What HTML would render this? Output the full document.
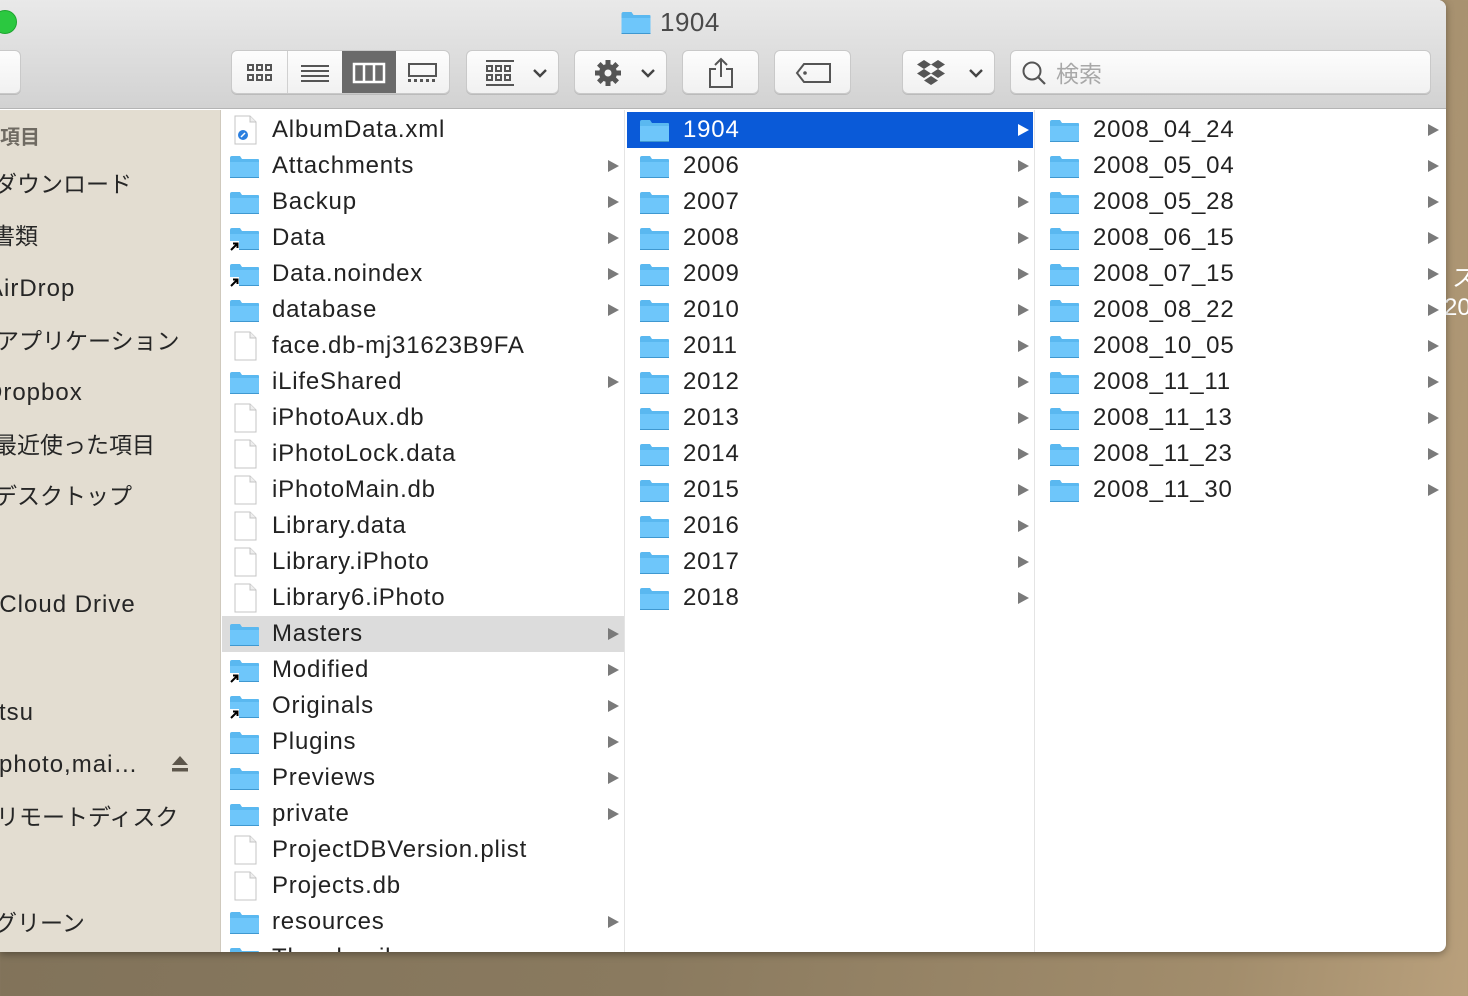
<!DOCTYPE html>
<html><head><meta charset="utf-8"><style>
*{margin:0;padding:0;box-sizing:border-box}
body{width:1468px;height:996px;overflow:hidden;position:relative;font-family:"Liberation Sans","Noto Sans CJK JP",sans-serif;background:linear-gradient(100deg,#7f7159 0%,#8a7a5f 50%,#a28d6c 85%,#b9a07c 100%);}
.win{position:absolute;left:0;top:0;width:1446px;height:952px;border-radius:0 8px 8px 0;overflow:hidden;background:#fff;box-shadow:0 2px 8px rgba(0,0,0,.35)}
.tb{position:absolute;left:0;top:0;width:1446px;height:109px;background:linear-gradient(#e9e9e9,#d2d2d2);border-bottom:1px solid #b4b4b4}
.btn{position:absolute;top:50px;height:44px;background:linear-gradient(#fdfdfd,#f1f1f1);border:1px solid #c9c9c9;border-radius:6px;box-shadow:0 1px 0 #bbb}
.side{position:absolute;left:0;top:110px;width:221px;height:842px;background:#e3ddd1;border-right:1px solid #cfc9bd;overflow:hidden}
.si{position:absolute;font-size:23px;color:#262626;white-space:nowrap;line-height:28px}
.si.l{font-size:24px;letter-spacing:1px}
.col{position:absolute;top:110px;height:842px;overflow:hidden}
.row{position:relative;height:36px;font-size:24px;color:#222;line-height:36px;white-space:nowrap;letter-spacing:0.8px}
.row .ic{position:absolute;top:7px}
.row .t{position:absolute;top:0}
.row .ar{position:absolute;top:12px;width:0;height:0;border-left:11px solid #7a7a7a;border-top:6px solid transparent;border-bottom:6px solid transparent}
.sel{background:#0a5ad8;color:#fff}
.sel .ar{border-left-color:#fff}
.gr{background:#dcdcdc}
.fd{width:31px;height:24px}
</style></head><body>
<svg width="0" height="0" style="position:absolute">
<defs>
<symbol id="f" viewBox="0 0 31 24"><path d="M1 3 Q1 1 3 1 L11 1 L13 4 L29 4 Q30 4 30 5 L30 22 Q30 23 29 23 L2 23 Q1 23 1 22 Z" fill="#5ab8f0"/><path d="M1 7 L30 7 L30 22 Q30 23 29 23 L2 23 Q1 23 1 22 Z" fill="#6ec6fa"/><path d="M1 22.5 L30 22.5" stroke="#3f98d0" stroke-width="1"/></symbol>
<symbol id="d" viewBox="0 0 31 30"><path d="M5 1 L20 1 L26 7 L26 29 L5 29 Z" fill="#fff" stroke="#c4c4c4"/><path d="M20 1 L20 7 L26 7" fill="#eee" stroke="#c4c4c4"/></symbol>
<symbol id="a" viewBox="0 0 10 10"><rect x="0" y="0" width="10" height="10" fill="#fff"/><path d="M2 9 L8 3 M4 2.5 L8.5 2.5 L8.5 7" stroke="#000" stroke-width="2" fill="none"/></symbol>
</defs></svg>
<div style="position:absolute;left:1452px;top:258px;color:#fff;font-size:24px">ス</div>
<div style="position:absolute;left:1444px;top:294px;color:#fff;font-size:24px">20</div>
<div class="win">
<div class="tb">
<div style="position:absolute;left:-7px;top:10px;width:24px;height:24px;border-radius:50%;background:#2bc840;border:1px solid #1ea530"></div>
<svg style="position:absolute;left:620px;top:11px" width="32" height="24"><use href="#f"/></svg>
<div style="position:absolute;left:660px;top:7px;font-size:26px;color:#4a4a4a;letter-spacing:0.5px">1904</div>
<div class="btn" style="left:-10px;width:31px"></div>
<div class="btn" style="left:231px;width:219px;overflow:hidden">
<div style="position:absolute;left:55px;top:0;width:1px;height:44px;background:#d0d0d0"></div>
<div style="position:absolute;left:110px;top:0;width:54px;height:44px;background:#6a6a6a"></div>
<svg style="position:absolute;left:14px;top:11px" width="30" height="22"><g fill="none" stroke="#555" stroke-width="2"><rect x="2" y="3" width="5" height="5"/><rect x="11" y="3" width="5" height="5"/><rect x="20" y="3" width="5" height="5"/><rect x="2" y="13" width="5" height="5"/><rect x="11" y="13" width="5" height="5"/><rect x="20" y="13" width="5" height="5"/></g></svg>
<svg style="position:absolute;left:68px;top:11px" width="30" height="22"><g stroke="#555" stroke-width="2"><path d="M1 4H29M1 9H29M1 14H29M1 19H29"/></g></svg>
<svg style="position:absolute;left:120px;top:11px" width="34" height="22"><g fill="none" stroke="#fff" stroke-width="2.5"><rect x="2" y="2" width="30" height="18"/><path d="M12 2V20M22 2V20"/></g></svg>
<svg style="position:absolute;left:175px;top:11px" width="32" height="22"><g fill="none" stroke="#555" stroke-width="2"><rect x="2" y="2" width="27" height="12"/></g><g fill="#555"><rect x="1" y="17" width="3" height="3"/><rect x="7" y="17" width="3" height="3"/><rect x="13" y="17" width="3" height="3"/><rect x="19" y="17" width="3" height="3"/><rect x="25" y="17" width="3" height="3"/></g></svg>
</div>
<div class="btn" style="left:466px;width:93px">
<svg style="position:absolute;left:18px;top:8px" width="30" height="28"><g fill="none" stroke="#555" stroke-width="2"><path d="M1 2H29M1 26H29"/><rect x="2" y="7" width="5" height="5"/><rect x="11" y="7" width="5" height="5"/><rect x="20" y="7" width="5" height="5"/><rect x="2" y="16" width="5" height="5"/><rect x="11" y="16" width="5" height="5"/><rect x="20" y="16" width="5" height="5"/></g></svg>
<svg style="position:absolute;left:65px;top:16px" width="16" height="12"><path d="M2 3L8 9L14 3" fill="none" stroke="#444" stroke-width="2.4"/></svg>
</div>
<div class="btn" style="left:574px;width:93px">
<svg style="position:absolute;left:18px;top:7px" width="30" height="30" viewBox="0 0 30 30"><g fill="#555"><circle cx="15" cy="15" r="9"/><g stroke="#555" stroke-width="5"><path d="M15 2V28M2 15H28M5.8 5.8L24.2 24.2M24.2 5.8L5.8 24.2"/></g></g><circle cx="15" cy="15" r="3.5" fill="#f5f5f5"/></svg>
<svg style="position:absolute;left:65px;top:16px" width="16" height="12"><path d="M2 3L8 9L14 3" fill="none" stroke="#444" stroke-width="2.4"/></svg>
</div>
<div class="btn" style="left:682px;width:77px">
<svg style="position:absolute;left:24px;top:6px" width="28" height="32"><g fill="none" stroke="#555" stroke-width="2"><path d="M9 12H3V30H25V12H19"/><path d="M14 2V20M8 8L14 2L20 8"/></g></svg>
</div>
<div class="btn" style="left:774px;width:77px">
<svg style="position:absolute;left:20px;top:11px" width="38" height="22"><path d="M9 2H35V20H9L2 11Z" fill="none" stroke="#555" stroke-width="2"/><circle cx="10" cy="11" r="1.8" fill="#555"/></svg>
</div>
<div class="btn" style="left:902px;width:93px">
<svg style="position:absolute;left:12px;top:8px" width="32" height="28" viewBox="0 0 32 28"><g fill="#555"><path d="M9 1L16 5.5L9 10L2 5.5Z"/><path d="M23 1L30 5.5L23 10L16 5.5Z"/><path d="M9 10L16 14.5L9 19L2 14.5Z"/><path d="M23 10L30 14.5L23 19L16 14.5Z"/><path d="M16 17L23 21.5L16 26L9 21.5Z"/></g></svg>
<svg style="position:absolute;left:65px;top:16px" width="16" height="12"><path d="M2 3L8 9L14 3" fill="none" stroke="#444" stroke-width="2.4"/></svg>
</div>
<div class="btn" style="left:1010px;width:421px">
<svg style="position:absolute;left:10px;top:9px" width="28" height="28"><circle cx="11" cy="11" r="8.5" fill="none" stroke="#555" stroke-width="2"/><path d="M17 17L24 24" stroke="#555" stroke-width="2.2"/></svg>
<div style="position:absolute;left:45px;top:4px;font-size:23px;color:#a8a8a8">検索</div>
</div>
</div>

<div class="side">
<div class="si" style="left:0;top:14px;font-size:20px;color:#6f6a62;font-weight:bold">項目</div>
<div class="si" style="left:-6px;top:60px">ダウンロード</div>
<div class="si" style="left:-8px;top:112px">書類</div>
<div class="si l" style="left:-13px;top:165px">AirDrop</div>
<div class="si" style="left:-4px;top:217px">アプリケーション</div>
<div class="si l" style="left:-15px;top:269px">Dropbox</div>
<div class="si" style="left:-6px;top:321px">最近使った項目</div>
<div class="si" style="left:-6px;top:372px">デスクトップ</div>
<div class="si l" style="left:-7px;top:481px">iCloud Drive</div>
<div class="si l" style="left:-1px;top:589px">tsu</div>
<div class="si l" style="left:-1px;top:641px">photo,mai…</div>
<svg style="position:absolute;left:171px;top:645px" width="18" height="20"><path d="M9 1L17 10H1Z" fill="#5d564b"/><rect x="1" y="13" width="16" height="3.5" fill="#5d564b"/></svg>
<div class="si" style="left:-4px;top:693px">リモートディスク</div>
<div class="si" style="left:-6px;top:799px">グリーン</div>
</div>

<div class="col" style="left:222px;width:403px;border-right:1px solid #e4e4e4;padding-top:2px">
<div class="row"><svg class="ic" style="left:8px;top:3px" width="31" height="30"><use href="#d"/><circle cx="13" cy="20" r="5" fill="#2a7fe0"/><path d="M11 22L15 18" stroke="#fff" stroke-width="1.5"/></svg><span class="t" style="left:50px">AlbumData.xml</span></div>
<div class="row"><svg class="ic fd" style="left:7px"><use href="#f"/></svg><span class="t" style="left:50px">Attachments</span><span class="ar" style="left:386px"></span></div>
<div class="row"><svg class="ic fd" style="left:7px"><use href="#f"/></svg><span class="t" style="left:50px">Backup</span><span class="ar" style="left:386px"></span></div>
<div class="row"><svg class="ic fd" style="left:7px"><use href="#f"/><use href="#a" x="0" y="14" width="10" height="10"/></svg><span class="t" style="left:50px">Data</span><span class="ar" style="left:386px"></span></div>
<div class="row"><svg class="ic fd" style="left:7px"><use href="#f"/><use href="#a" x="0" y="14" width="10" height="10"/></svg><span class="t" style="left:50px">Data.noindex</span><span class="ar" style="left:386px"></span></div>
<div class="row"><svg class="ic fd" style="left:7px"><use href="#f"/></svg><span class="t" style="left:50px">database</span><span class="ar" style="left:386px"></span></div>
<div class="row"><svg class="ic" style="left:8px;top:3px" width="31" height="30"><use href="#d"/></svg><span class="t" style="left:50px">face.db-mj31623B9FA</span></div>
<div class="row"><svg class="ic fd" style="left:7px"><use href="#f"/></svg><span class="t" style="left:50px">iLifeShared</span><span class="ar" style="left:386px"></span></div>
<div class="row"><svg class="ic" style="left:8px;top:3px" width="31" height="30"><use href="#d"/></svg><span class="t" style="left:50px">iPhotoAux.db</span></div>
<div class="row"><svg class="ic" style="left:8px;top:3px" width="31" height="30"><use href="#d"/></svg><span class="t" style="left:50px">iPhotoLock.data</span></div>
<div class="row"><svg class="ic" style="left:8px;top:3px" width="31" height="30"><use href="#d"/></svg><span class="t" style="left:50px">iPhotoMain.db</span></div>
<div class="row"><svg class="ic" style="left:8px;top:3px" width="31" height="30"><use href="#d"/></svg><span class="t" style="left:50px">Library.data</span></div>
<div class="row"><svg class="ic" style="left:8px;top:3px" width="31" height="30"><use href="#d"/></svg><span class="t" style="left:50px">Library.iPhoto</span></div>
<div class="row"><svg class="ic" style="left:8px;top:3px" width="31" height="30"><use href="#d"/></svg><span class="t" style="left:50px">Library6.iPhoto</span></div>
<div class="row gr"><svg class="ic fd" style="left:7px"><use href="#f"/></svg><span class="t" style="left:50px">Masters</span><span class="ar" style="left:386px"></span></div>
<div class="row"><svg class="ic fd" style="left:7px"><use href="#f"/><use href="#a" x="0" y="14" width="10" height="10"/></svg><span class="t" style="left:50px">Modified</span><span class="ar" style="left:386px"></span></div>
<div class="row"><svg class="ic fd" style="left:7px"><use href="#f"/><use href="#a" x="0" y="14" width="10" height="10"/></svg><span class="t" style="left:50px">Originals</span><span class="ar" style="left:386px"></span></div>
<div class="row"><svg class="ic fd" style="left:7px"><use href="#f"/></svg><span class="t" style="left:50px">Plugins</span><span class="ar" style="left:386px"></span></div>
<div class="row"><svg class="ic fd" style="left:7px"><use href="#f"/></svg><span class="t" style="left:50px">Previews</span><span class="ar" style="left:386px"></span></div>
<div class="row"><svg class="ic fd" style="left:7px"><use href="#f"/></svg><span class="t" style="left:50px">private</span><span class="ar" style="left:386px"></span></div>
<div class="row"><svg class="ic" style="left:8px;top:3px" width="31" height="30"><use href="#d"/></svg><span class="t" style="left:50px">ProjectDBVersion.plist</span></div>
<div class="row"><svg class="ic" style="left:8px;top:3px" width="31" height="30"><use href="#d"/></svg><span class="t" style="left:50px">Projects.db</span></div>
<div class="row"><svg class="ic fd" style="left:7px"><use href="#f"/></svg><span class="t" style="left:50px">resources</span><span class="ar" style="left:386px"></span></div>
<div class="row"><svg class="ic fd" style="left:7px"><use href="#f"/></svg><span class="t" style="left:50px">Thumbnails</span><span class="ar" style="left:386px"></span></div>
</div>

<div class="col" style="left:626px;width:409px;border-right:1px solid #e4e4e4;padding-top:2px">
<div class="row sel" style="margin-left:1px;margin-right:1px"><svg class="ic fd" style="left:12px"><use href="#f"/></svg><span class="t" style="left:56px">1904</span><span class="ar" style="left:391px"></span></div>
<div class="row"><svg class="ic fd" style="left:13px"><use href="#f"/></svg><span class="t" style="left:57px">2006</span><span class="ar" style="left:392px"></span></div>
<div class="row"><svg class="ic fd" style="left:13px"><use href="#f"/></svg><span class="t" style="left:57px">2007</span><span class="ar" style="left:392px"></span></div>
<div class="row"><svg class="ic fd" style="left:13px"><use href="#f"/></svg><span class="t" style="left:57px">2008</span><span class="ar" style="left:392px"></span></div>
<div class="row"><svg class="ic fd" style="left:13px"><use href="#f"/></svg><span class="t" style="left:57px">2009</span><span class="ar" style="left:392px"></span></div>
<div class="row"><svg class="ic fd" style="left:13px"><use href="#f"/></svg><span class="t" style="left:57px">2010</span><span class="ar" style="left:392px"></span></div>
<div class="row"><svg class="ic fd" style="left:13px"><use href="#f"/></svg><span class="t" style="left:57px">2011</span><span class="ar" style="left:392px"></span></div>
<div class="row"><svg class="ic fd" style="left:13px"><use href="#f"/></svg><span class="t" style="left:57px">2012</span><span class="ar" style="left:392px"></span></div>
<div class="row"><svg class="ic fd" style="left:13px"><use href="#f"/></svg><span class="t" style="left:57px">2013</span><span class="ar" style="left:392px"></span></div>
<div class="row"><svg class="ic fd" style="left:13px"><use href="#f"/></svg><span class="t" style="left:57px">2014</span><span class="ar" style="left:392px"></span></div>
<div class="row"><svg class="ic fd" style="left:13px"><use href="#f"/></svg><span class="t" style="left:57px">2015</span><span class="ar" style="left:392px"></span></div>
<div class="row"><svg class="ic fd" style="left:13px"><use href="#f"/></svg><span class="t" style="left:57px">2016</span><span class="ar" style="left:392px"></span></div>
<div class="row"><svg class="ic fd" style="left:13px"><use href="#f"/></svg><span class="t" style="left:57px">2017</span><span class="ar" style="left:392px"></span></div>
<div class="row"><svg class="ic fd" style="left:13px"><use href="#f"/></svg><span class="t" style="left:57px">2018</span><span class="ar" style="left:392px"></span></div>
</div>

<div class="col" style="left:1036px;width:410px;padding-top:2px">
<div class="row"><svg class="ic fd" style="left:13px"><use href="#f"/></svg><span class="t" style="left:57px">2008_04_24</span><span class="ar" style="left:392px"></span></div>
<div class="row"><svg class="ic fd" style="left:13px"><use href="#f"/></svg><span class="t" style="left:57px">2008_05_04</span><span class="ar" style="left:392px"></span></div>
<div class="row"><svg class="ic fd" style="left:13px"><use href="#f"/></svg><span class="t" style="left:57px">2008_05_28</span><span class="ar" style="left:392px"></span></div>
<div class="row"><svg class="ic fd" style="left:13px"><use href="#f"/></svg><span class="t" style="left:57px">2008_06_15</span><span class="ar" style="left:392px"></span></div>
<div class="row"><svg class="ic fd" style="left:13px"><use href="#f"/></svg><span class="t" style="left:57px">2008_07_15</span><span class="ar" style="left:392px"></span></div>
<div class="row"><svg class="ic fd" style="left:13px"><use href="#f"/></svg><span class="t" style="left:57px">2008_08_22</span><span class="ar" style="left:392px"></span></div>
<div class="row"><svg class="ic fd" style="left:13px"><use href="#f"/></svg><span class="t" style="left:57px">2008_10_05</span><span class="ar" style="left:392px"></span></div>
<div class="row"><svg class="ic fd" style="left:13px"><use href="#f"/></svg><span class="t" style="left:57px">2008_11_11</span><span class="ar" style="left:392px"></span></div>
<div class="row"><svg class="ic fd" style="left:13px"><use href="#f"/></svg><span class="t" style="left:57px">2008_11_13</span><span class="ar" style="left:392px"></span></div>
<div class="row"><svg class="ic fd" style="left:13px"><use href="#f"/></svg><span class="t" style="left:57px">2008_11_23</span><span class="ar" style="left:392px"></span></div>
<div class="row"><svg class="ic fd" style="left:13px"><use href="#f"/></svg><span class="t" style="left:57px">2008_11_30</span><span class="ar" style="left:392px"></span></div>
</div>
</div>
</body></html>
